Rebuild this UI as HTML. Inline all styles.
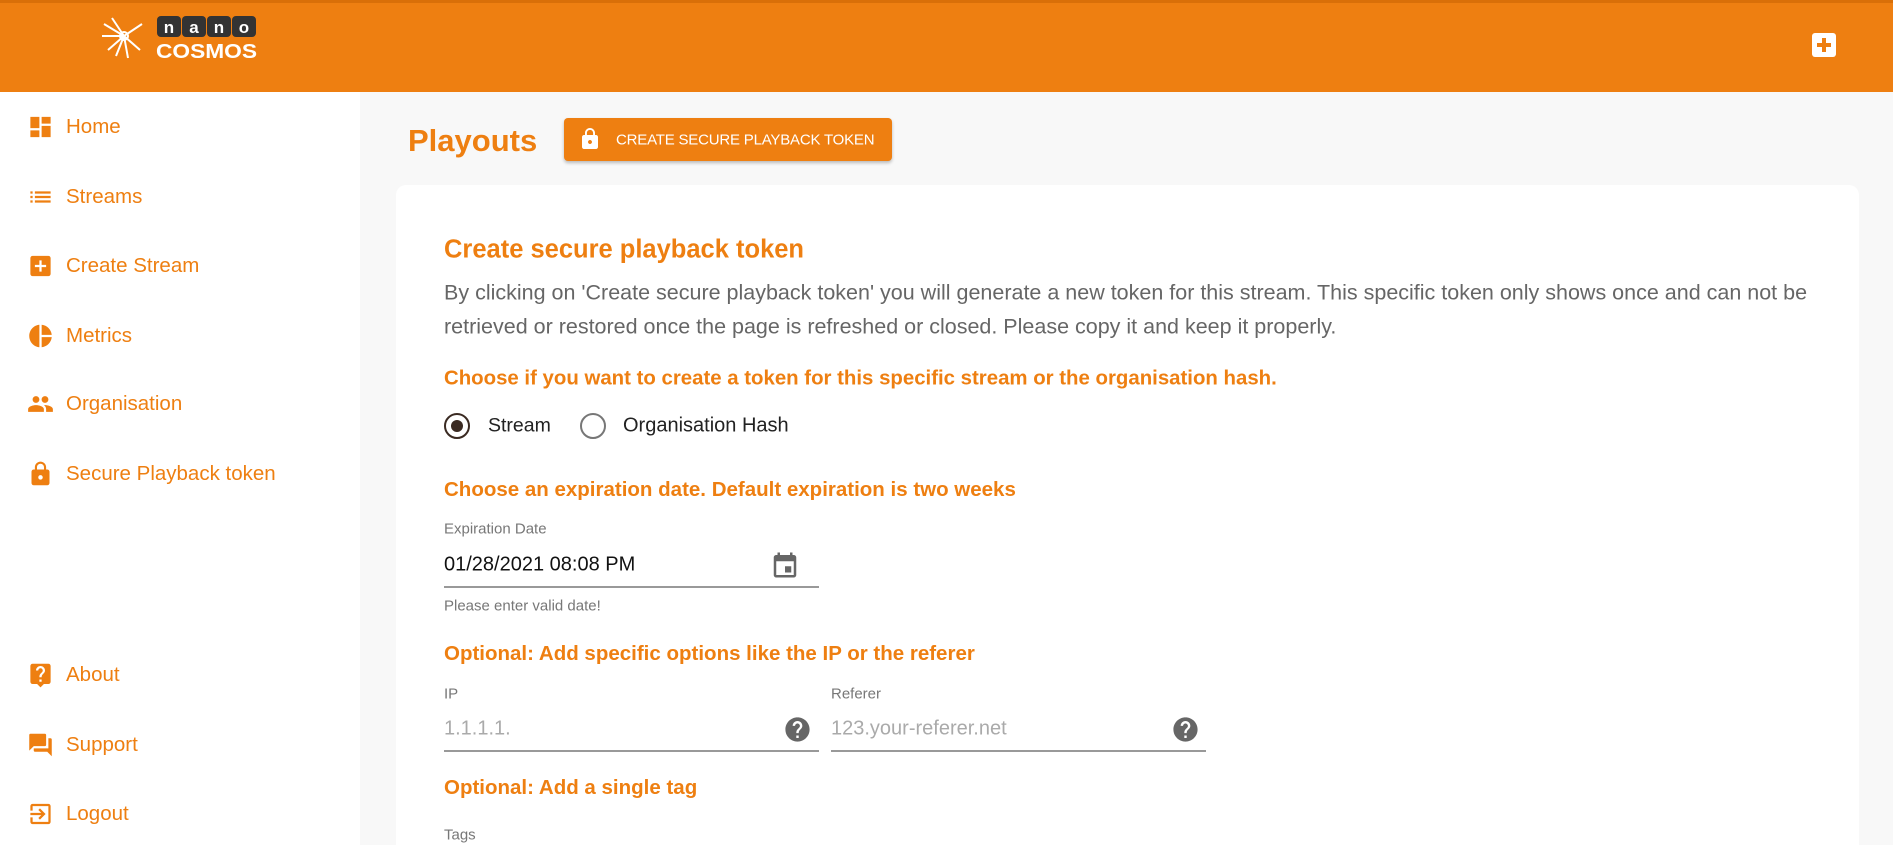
<!DOCTYPE html>
<html style="width:1893px;height:845px;overflow:hidden"><head><meta charset="utf-8"><style>
*{margin:0;padding:0;box-sizing:border-box}
body{width:1893px;height:845px;overflow:hidden;background:#f8f8f8;font-family:"Liberation Sans",sans-serif;position:relative}
.a{position:absolute;white-space:nowrap}
.hdr{left:0;top:0;width:1893px;height:92px;background:#ee7f11;border-top:3px solid #d96f08}
.side{left:0;top:92px;width:360px;height:753px;background:#fff}
.nav{left:66px;font-size:20.5px;color:#ee7f11;transform:translateY(-50%)}
.ic{left:27px;width:27px;height:27px;transform:translateY(-50%)}
.card{left:396px;top:185px;width:1463px;height:660px;background:#fff;border-radius:10px 10px 0 0}
.h{left:444px;font-weight:bold;color:#ee7f11;font-size:20.4px;transform:translateY(-50%)}
.p{left:444px;font-size:21.5px;color:#666;transform:translateY(-50%)}
.lbl{font-size:15px;color:#777;transform:translateY(-50%)}
.line{height:2px;background:#999}
</style></head><body>
<div class="a hdr"></div>
<svg class="a" style="left:100px;top:14px" width="160" height="46" viewBox="0 0 160 46">
 <g stroke="#fff" stroke-width="2" fill="none">
  <path d="M24 22 L4 10 M24 22 L2 22 M24 22 L8 36 M24 22 L16 42 M24 22 L28 44 M24 22 L40 36 M24 22 L42 10 M24 22 L12 4"/>
  <circle cx="24" cy="22" r="4"/>
 </g>
 <rect x="57" y="2" width="24" height="21" rx="4" fill="#333"/><rect x="82" y="2" width="24" height="21" rx="4" fill="#333"/>
 <rect x="107" y="2" width="24" height="21" rx="4" fill="#333"/><rect x="132" y="2" width="24" height="21" rx="4" fill="#333"/>
 <text x="69" y="19" fill="#fff" font-size="17" font-weight="bold" text-anchor="middle" font-family="Liberation Sans">n</text>
 <text x="94" y="19" fill="#fff" font-size="17" font-weight="bold" text-anchor="middle" font-family="Liberation Sans">a</text>
 <text x="119" y="19" fill="#fff" font-size="17" font-weight="bold" text-anchor="middle" font-family="Liberation Sans">n</text>
 <text x="144" y="19" fill="#fff" font-size="17" font-weight="bold" text-anchor="middle" font-family="Liberation Sans">o</text>
 <text x="56" y="44" fill="#fff" font-size="20" font-weight="bold" font-family="Liberation Sans" textLength="101" lengthAdjust="spacingAndGlyphs">COSMOS</text>
</svg>
<div class="a" style="left:1812px;top:33px;width:24px;height:24px;background:#fff;border-radius:3px"></div>
<div class="a" style="left:1822px;top:38px;width:4px;height:14px;background:#ee7f11"></div>
<div class="a" style="left:1817px;top:43px;width:14px;height:4px;background:#ee7f11"></div>

<div class="a side"></div>
<svg class="a ic" style="top:127px" viewBox="0 0 24 24"><path fill="#ee7f11" d="M3 13h8V3H3v10zm0 8h8v-6H3v6zm10 0h8V11h-8v10zm0-18v6h8V3h-8z"/></svg>
<div class="a nav" style="top:127px">Home</div>
<svg class="a ic" style="top:197px" viewBox="0 0 24 24"><path fill="#ee7f11" d="M3 13h2v-2H3v2zm0 4h2v-2H3v2zm0-8h2V7H3v2zm4 4h14v-2H7v2zm0 4h14v-2H7v2zM7 7v2h14V7H7z"/></svg>
<div class="a nav" style="top:197px">Streams</div>
<svg class="a ic" style="top:266px" viewBox="0 0 24 24"><path fill="#ee7f11" d="M19 3H5c-1.1 0-2 .9-2 2v14c0 1.1.9 2 2 2h14c1.1 0 2-.9 2-2V5c0-1.1-.9-2-2-2zm-2 10h-4v4h-2v-4H7v-2h4V7h2v4h4v2z"/></svg>
<div class="a nav" style="top:266px">Create Stream</div>
<svg class="a ic" style="top:336px" viewBox="0 0 24 24"><path fill="#ee7f11" d="M11 2v20c-5.07-.5-9-4.79-9-10s3.93-9.5 9-10zm2.03 0v8.99H22c-.47-4.74-4.24-8.520-8.97-8.99zm0 11.01V22c4.74-.47 8.5-4.25 8.97-8.99h-8.97z"/></svg>
<div class="a nav" style="top:336px">Metrics</div>
<svg class="a ic" style="top:404px" viewBox="0 0 24 24"><path fill="#ee7f11" d="M16 11c1.66 0 2.99-1.34 2.99-3S17.66 5 16 5c-1.66 0-3 1.34-3 3s1.34 3 3 3zm-8 0c1.66 0 2.99-1.34 2.99-3S9.66 5 8 5C6.34 5 5 6.34 5 8s1.34 3 3 3zm0 2c-2.33 0-7 1.17-7 3.5V19h14v-2.5c0-2.33-4.670-3.5-7-3.5zm8 0c-.29 0-.62.02-.97.05 1.16.84 1.97 1.97 1.97 3.45V19h6v-2.5c0-2.33-4.67-3.5-7-3.5z"/></svg>
<div class="a nav" style="top:404px">Organisation</div>
<svg class="a ic" style="top:474px" viewBox="0 0 24 24"><path fill="#ee7f11" d="M18 8h-1V6c0-2.76-2.24-5-5-5S7 3.24 7 6v2H6c-1.1 0-2 .9-2 2v10c0 1.1.9 2 2 2h12c1.1 0 2-.9 2-2V10c0-1.1-.9-2-2-2zm-6 9c-1.1 0-2-.9-2-2s.9-2 2-2 2 .9 2 2-.9 2-2 2zm3.1-9H8.9V6c0-1.71 1.39-3.1 3.1-3.1 1.71 0 3.1 1.39 3.1 3.1v2z"/></svg>
<div class="a nav" style="top:474px">Secure Playback token</div>
<svg class="a ic" style="top:675px" viewBox="0 0 24 24"><path fill="#ee7f11" d="M19 2H5c-1.11 0-2 .9-2 2v14c0 1.1.89 2 2 2h4l3 3 3-3h4c1.1 0 2-.9 2-2V4c0-1.1-.9-2-2-2zm-6 16h-2v-2h2v2zm2.07-7.75l-.9.92C13.45 11.9 13 12.5 13 14h-2v-.5c0-1.1.45-2.1 1.17-2.83l1.24-1.26c.37-.36.59-.86.59-1.41 0-1.1-.9-2-2-2s-2 .9-2 2H8c0-2.21 1.79-4 4-4s4 1.79 4 4c0 .88-.36 1.68-.93 2.25z"/></svg>
<div class="a nav" style="top:675px">About</div>
<svg class="a ic" style="top:745px" viewBox="0 0 24 24"><path fill="#ee7f11" d="M21 6h-2v9H6v2c0 .55.45 1 1 1h11l4 4V7c0-.55-.45-1-1-1zm-4 6V3c0-.55-.45-1-1-1H3c-.55 0-1 .45-1 1v14l4-4h10c.55 0 1-.45 1-1z"/></svg>
<div class="a nav" style="top:745px">Support</div>
<svg class="a ic" style="top:814px" viewBox="0 0 24 24"><path fill="#ee7f11" d="M10.09 15.59L11.5 17l5-5-5-5-1.41 1.41L12.67 11H3v2h9.67l-2.58 2.59zM19 3H5c-1.11 0-2 .9-2 2v4h2V5h14v14H5v-4H3v4c0 1.1.89 2 2 2h14c1.1 0 2-.9 2-2V5c0-1.1-.9-2-2-2z"/></svg>
<div class="a nav" style="top:814px">Logout</div>

<div class="a" style="left:408px;top:141px;transform:translateY(-50%);font-size:31px;font-weight:bold;color:#ee7f11">Playouts</div>
<div class="a" style="left:564px;top:118px;width:328px;height:43px;background:#ee7f11;border-radius:4px;box-shadow:0 2px 3px rgba(0,0,0,.25)"></div>
<svg class="a" style="left:578px;top:127px" width="24" height="24" viewBox="0 0 24 24"><path fill="#fff" d="M18 8h-1V6c0-2.76-2.24-5-5-5S7 3.24 7 6v2H6c-1.1 0-2 .9-2 2v10c0 1.1.9 2 2 2h12c1.1 0 2-.9 2-2V10c0-1.1-.9-2-2-2zm-6 9c-1.1 0-2-.9-2-2s.9-2 2-2 2 .9 2 2-.9 2-2 2zm3.1-9H8.9V6c0-1.71 1.39-3.1 3.1-3.1 1.71 0 3.1 1.39 3.1 3.1v2z"/></svg>
<div class="a" style="left:616px;top:140px;transform:translateY(-50%);font-size:15px;color:#fff;letter-spacing:-0.2px">CREATE SECURE PLAYBACK TOKEN</div>

<div class="a card"></div>
<div class="a h" style="top:250px;font-size:25.5px">Create secure playback token</div>
<div class="a p" style="top:293px">By clicking on 'Create secure playback token' you will generate a new token for this stream. This specific token only shows once and can not be</div>
<div class="a p" style="top:327px">retrieved or restored once the page is refreshed or closed. Please copy it and keep it properly.</div>
<div class="a h" style="top:379px">Choose if you want to create a token for this specific stream or the organisation hash.</div>
<div class="a" style="left:444px;top:413px;width:26px;height:26px;border:2.5px solid #3a2a22;border-radius:50%"></div>
<div class="a" style="left:451px;top:420px;width:12px;height:12px;background:#3a2a22;border-radius:50%"></div>
<div class="a" style="left:488px;top:426px;transform:translateY(-50%);font-size:19.5px;color:#222">Stream</div>
<div class="a" style="left:580px;top:413px;width:26px;height:26px;border:2.5px solid #777;border-radius:50%"></div>
<div class="a" style="left:623px;top:426px;transform:translateY(-50%);font-size:20px;color:#222">Organisation Hash</div>
<div class="a h" style="top:490px;font-size:20.5px">Choose an expiration date. Default expiration is two weeks</div>
<div class="a lbl" style="left:444px;top:529px">Expiration Date</div>
<div class="a" style="left:444px;top:565px;transform:translateY(-50%);font-size:20px;color:#111">01/28/2021 08:08 PM</div>
<svg class="a" style="left:770px;top:550px" width="30" height="30" viewBox="0 0 24 24"><path fill="#666" d="M19 4h-1V2h-2v2H8V2H6v2H5c-1.11 0-2 .9-2 2v14c0 1.1.89 2 2 2h14c1.1 0 2-.9 2-2V6c0-1.1-.9-2-2-2zm0 16H5V9h14v11zM12 13h5v5h-5z" /></svg>
<div class="a line" style="left:444px;top:586px;width:375px"></div>
<div class="a lbl" style="left:444px;top:606px;font-size:15px">Please enter valid date!</div>
<div class="a h" style="top:654px;font-size:20.5px">Optional: Add specific options like the IP or the referer</div>
<div class="a lbl" style="left:444px;top:694px">IP</div>
<div class="a lbl" style="left:831px;top:694px">Referer</div>
<div class="a" style="left:444px;top:729px;transform:translateY(-50%);font-size:20px;color:#aaa">1.1.1.1.</div>
<div class="a" style="left:831px;top:729px;transform:translateY(-50%);font-size:20px;color:#aaa">123.your-referer.net</div>
<svg class="a" style="left:783px;top:715px" width="29" height="29" viewBox="0 0 24 24"><path fill="#666" d="M12 2C6.48 2 2 6.48 2 12s4.48 10 10 10 10-4.48 10-10S17.52 2 12 2zm1 17h-2v-2h2v2zm2.07-7.75l-.9.92C13.45 12.9 13 13.5 13 15h-2v-.5c0-1.1.45-2.1 1.17-2.83l1.24-1.26c.37-.36.59-.86.59-1.41 0-1.1-.9-2-2-2s-2 .9-2 2H8c0-2.21 1.79-4 4-4s4 1.79 4 4c0 .88-.36 1.68-.93 2.25z"/></svg>
<svg class="a" style="left:1171px;top:715px" width="29" height="29" viewBox="0 0 24 24"><path fill="#666" d="M12 2C6.48 2 2 6.48 2 12s4.48 10 10 10 10-4.48 10-10S17.52 2 12 2zm1 17h-2v-2h2v2zm2.07-7.75l-.9.92C13.45 12.9 13 13.5 13 15h-2v-.5c0-1.1.45-2.1 1.17-2.83l1.24-1.26c.37-.36.59-.86.59-1.41 0-1.1-.9-2-2-2s-2 .9-2 2H8c0-2.21 1.79-4 4-4s4 1.79 4 4c0 .88-.36 1.68-.93 2.25z"/></svg>
<div class="a line" style="left:444px;top:750px;width:375px"></div>
<div class="a line" style="left:831px;top:750px;width:375px"></div>
<div class="a h" style="top:788px;font-size:20.5px">Optional: Add a single tag</div>
<div class="a lbl" style="left:444px;top:835px">Tags</div>
</body></html>
